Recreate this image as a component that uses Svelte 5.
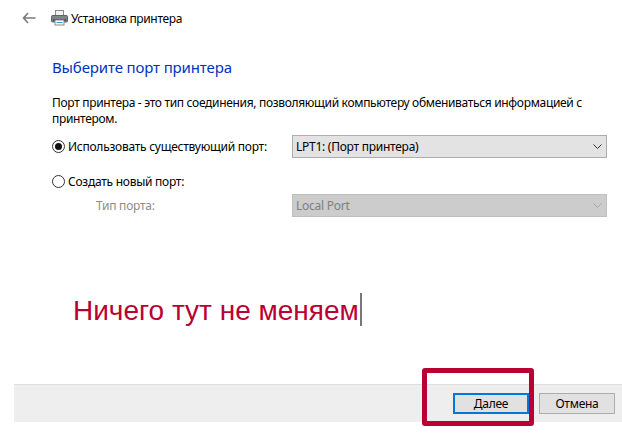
<script>
  let mode = $state('existing')
</script>

<div class="window">
  <header class="titlebar">
    <svg class="back" width="14" height="12" viewBox="0 0 14 12">
      <path d="M6 1 1.5 6 6 11M2 6h11.5" fill="none" stroke="#7a7a7a" stroke-width="1.6" />
    </svg>
    <svg class="printer" width="17" height="16" viewBox="0 0 17 16">
      <rect x="4.5" y="0.5" width="8" height="5" fill="#f2f2f2" stroke="#8a8a8a" />
      <rect x="0.5" y="5.5" width="16" height="6.5" rx="1" fill="#7f8489" stroke="#5c6166" />
      <rect x="2" y="9" width="13" height="2" fill="#4a4f54" />
      <rect x="4" y="10" width="9" height="5" fill="#fff" stroke="#8a8a8a" />
      <rect x="5.5" y="12" width="6" height="1" fill="#3d9be0" />
    </svg>
    <span class="title">Установка принтера</span>
  </header>

  <main class="content">
    <h1>Выберите порт принтера</h1>
    <p>Порт принтера - это тип соединения, позволяющий компьютеру обмениваться информацией с принтером.</p>

    <div class="row first">
      <label class="radio">
        <input type="radio" bind:group={mode} value="existing" />
        <span class="dot"></span>
        Использовать существующий порт:
      </label>
      <div class="combo">
        <span>LPT1: (Порт принтера)</span>
        <svg width="9" height="5" viewBox="0 0 9 5"><path d="M.5.5l4 4 4-4" fill="none" stroke="#333" /></svg>
      </div>
    </div>

    <div class="row second">
      <label class="radio">
        <input type="radio" bind:group={mode} value="new" />
        <span class="dot"></span>
        Создать новый порт:
      </label>
    </div>

    <div class="row third">
      <span class="sublabel">Тип порта:</span>
      <div class="combo disabled">
        <span>Local Port</span>
        <svg width="9" height="5" viewBox="0 0 9 5"><path d="M.5.5l4 4 4-4" fill="none" stroke="#a8a8a8" /></svg>
      </div>
    </div>

    <div class="note">Ничего тут не меняем<i class="caret"></i></div>
  </main>

  <footer class="footer">
    <button class="primary">Далее</button>
    <button>Отмена</button>
  </footer>

  <div class="highlight"></div>
</div>

<style>
  :global(body) {
    margin: 0;
    background: #fff;
  }
  .window {
    position: relative;
    width: 622px;
    height: 437px;
    overflow: hidden;
    display: flex;
    flex-direction: column;
    font-family: "Noto Sans", sans-serif;
    font-size: 12px;
    letter-spacing: -0.26px;
    color: #000;
  }
  .titlebar {
    height: 36px;
    display: flex;
    align-items: center;
    padding-left: 22px;
    box-sizing: border-box;
  }
  .title {
    letter-spacing: -0.36px;
  }
  .back {
    margin-right: 15px;
  }
  .printer {
    margin-right: 3px;
  }
  .content {
    height: 348px;
    box-sizing: border-box;
    padding: 20px 15px 0 52px;
  }
  h1 {
    margin: 0;
    font-size: 15px;
    line-height: 22px;
    font-weight: 400;
    letter-spacing: -0.14px;
    color: #0033bc;
  }
  p {
    margin: 17px 0 0;
    line-height: 16px;
    width: 540px;
    letter-spacing: -0.32px;
  }
  .row {
    display: flex;
    align-items: center;
  }
  .first {
    margin-top: 8px;
    height: 23px;
  }
  .second {
    margin-top: 13px;
    height: 20px;
  }
  .third {
    margin-top: 3px;
    height: 23px;
    padding-left: 44px;
  }
  .radio {
    display: flex;
    align-items: center;
    width: 240px;
    white-space: nowrap;
  }
  .radio input {
    display: none;
  }
  .dot {
    width: 13px;
    height: 13px;
    box-sizing: border-box;
    border: 1px solid #333;
    border-radius: 50%;
    margin-right: 3px;
    position: relative;
  }
  .radio input:checked + .dot::after {
    content: "";
    position: absolute;
    inset: 2px;
    border-radius: 50%;
    background: #111;
  }
  .sublabel {
    width: 196px;
    color: #8c8c8c;
  }
  .combo {
    width: 315px;
    height: 23px;
    box-sizing: border-box;
    border: 1px solid #adadad;
    background: #e3e3e3;
    display: flex;
    align-items: center;
    justify-content: space-between;
    padding: 0 3px 0 3px;
  }
  .combo svg {
    margin-right: 1px;
  }
  .combo.disabled {
    background: #cccccc;
    border-color: #bfbfbf;
    color: #808080;
  }
  .note {
    position: absolute;
    left: 73px;
    top: 293px;
    font-family: "Liberation Sans", sans-serif;
    font-size: 28px;
    line-height: 36px;
    letter-spacing: 0;
    color: #b90033;
    white-space: nowrap;
  }
  .caret {
    display: inline-block;
    width: 2px;
    height: 33px;
    margin-left: 1px;
    vertical-align: top;
    background: #777;
  }
  .footer {
    margin-left: 14px;
    height: 38px;
    box-sizing: border-box;
    background: #eeeeee;
    border-top: 1px solid #dfdfdf;
    display: flex;
    justify-content: flex-end;
    align-items: center;
    gap: 10px;
    padding: 0 7px 0 0;
  }
  button {
    width: 76px;
    height: 21px;
    padding: 0;
    box-sizing: border-box;
    border: 1px solid #adadad;
    background: #e1e1e1;
    font: inherit;
    letter-spacing: inherit;
    color: #000;
  }
  button.primary {
    border: 2px solid #0078d7;
  }
  .highlight {
    position: absolute;
    left: 422px;
    top: 368px;
    width: 112px;
    height: 58px;
    box-sizing: border-box;
    border: 5px solid #b90033;
    border-radius: 3px;
  }
</style>
